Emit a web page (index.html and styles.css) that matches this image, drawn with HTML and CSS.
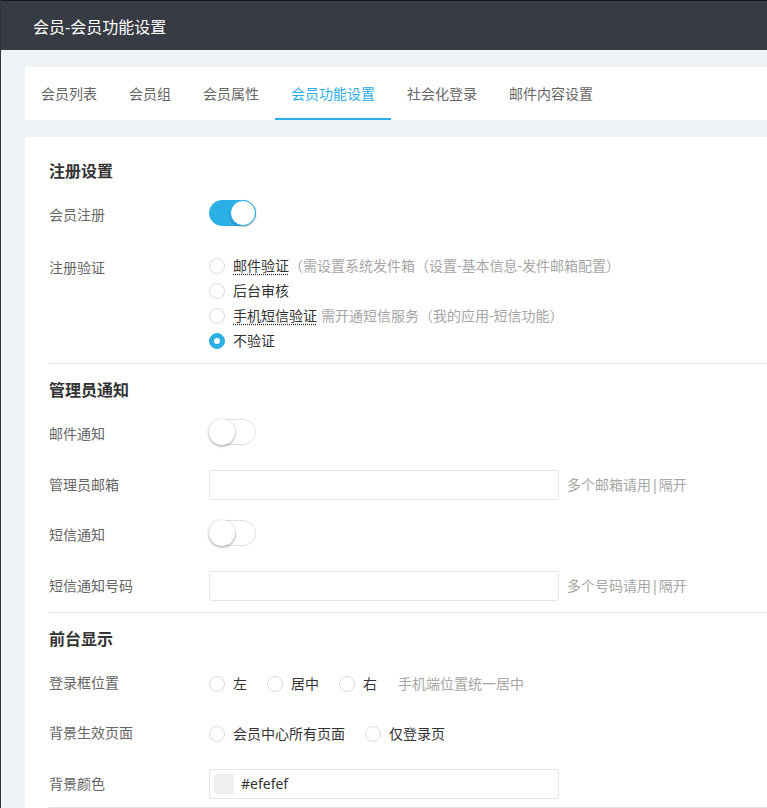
FILE: index.html
```html
<!DOCTYPE html>
<html lang="zh-CN">
<head>
<meta charset="utf-8">
<title>会员功能设置</title>
<link rel="stylesheet" href="styles.css">
</head>
<body>
<div class="topbar">会员-会员功能设置</div>
<div class="main">
  <div class="tabs">
    <span class="tab">会员列表</span>
    <span class="tab">会员组</span>
    <span class="tab">会员属性</span>
    <span class="tab active">会员功能设置</span>
    <span class="tab">社会化登录</span>
    <span class="tab">邮件内容设置</span>
  </div>
  <div class="card">
    <div class="section s1">
      <h3 class="sec-title">注册设置</h3>
      <div class="row">
        <div class="label">会员注册</div>
        <div class="control"><span class="switch on"><span class="knob"></span></span></div>
      </div>
      <div class="row last">
        <div class="label label-radio">注册验证</div>
        <div class="control radio-list">
          <div class="radio-line"><span class="radio"></span><span class="abbr">邮件验证</span><span class="hint">（需设置系统发件箱（设置-基本信息-发件邮箱配置）</span></div>
          <div class="radio-line"><span class="radio"></span><span class="opt">后台审核</span></div>
          <div class="radio-line"><span class="radio"></span><span class="abbr">手机短信验证</span><span class="hint gap">需开通短信服务（我的应用-短信功能）</span></div>
          <div class="radio-line"><span class="radio checked"></span><span class="opt">不验证</span></div>
        </div>
      </div>
    </div>

    <div class="section s2">
      <h3 class="sec-title">管理员通知</h3>
      <div class="row">
        <div class="label">邮件通知</div>
        <div class="control"><span class="switch"><span class="knob"></span></span></div>
      </div>
      <div class="row">
        <div class="label">管理员邮箱</div>
        <div class="control"><span class="input"></span><span class="hint side">多个邮箱请用|隔开</span></div>
      </div>
      <div class="row">
        <div class="label">短信通知</div>
        <div class="control"><span class="switch"><span class="knob"></span></span></div>
      </div>
      <div class="row last">
        <div class="label">短信通知号码</div>
        <div class="control"><span class="input"></span><span class="hint side">多个号码请用|隔开</span></div>
      </div>
    </div>

    <div class="section s3">
      <h3 class="sec-title">前台显示</h3>
      <div class="row">
        <div class="label">登录框位置</div>
        <div class="control inline-radios">
          <span class="radio-inline"><span class="radio"></span><span class="opt">左</span></span>
          <span class="radio-inline"><span class="radio"></span><span class="opt">居中</span></span>
          <span class="radio-inline"><span class="radio"></span><span class="opt">右</span></span>
          <span class="hint">手机端位置统一居中</span>
        </div>
      </div>
      <div class="row">
        <div class="label">背景生效页面</div>
        <div class="control inline-radios">
          <span class="radio-inline"><span class="radio"></span><span class="opt">会员中心所有页面</span></span>
          <span class="radio-inline"><span class="radio"></span><span class="opt">仅登录页</span></span>
        </div>
      </div>
      <div class="row last">
        <div class="label">背景颜色</div>
        <div class="control"><span class="input color-input"><span class="swatch"></span><span class="color-text">#efefef</span></span></div>
      </div>
    </div>
  </div>
</div>
</body>
</html>
```

FILE: styles.css
```css
html {
  overflow: hidden;
}

body {
  margin: 0;
  background: #eef3f6;
  border-left: 1px solid #2f333a;
  font-family: "Noto Sans", "Noto Sans CJK SC", sans-serif;
  font-size: 14px;
  color: #333;
  min-height: 808px;
  box-sizing: border-box;
}

.topbar {
  height: 50px;
  box-sizing: border-box;
  background: #373b43;
  border-top: 1px solid #15171a;
  padding: 3px 0 0 32px;
  line-height: 46px;
  font-size: 16px;
  color: #fff;
}

.main {
  padding: 17px 0 0 24px;
}

.tabs {
  display: flex;
  background: #fff;
  height: 53px;
  box-sizing: border-box;
}

.tab {
  padding: 2px 16px 0;
  line-height: 49px;
  color: #666;
  border-bottom: 2px solid transparent;
  white-space: nowrap;
}

.tab.active {
  color: #2aaee5;
  border-bottom-color: #2aaee5;
}

.card {
  margin-top: 17px;
  background: #fff;
  padding-left: 24px;
}

.section {
  padding-top: 16px;
  border-top: 1px solid #e7e7e7;
}

.section.s1 {
  border-top: none;
  padding-top: 24px;
  padding-bottom: 10.5px;
}

.section.s2 {
  padding-bottom: 11px;
}

.section.s3 {
  padding-bottom: 8px;
  border-bottom: 1px solid #e2e2e2;
}

.sec-title {
  margin: 0 0 19px;
  font-size: 16px;
  line-height: 20px;
  font-weight: bold;
  color: #333;
}

.row {
  display: flex;
  min-height: 30px;
  margin-bottom: 20.5px;
}

.row.last {
  margin-bottom: 0;
}

.label {
  width: 160px;
  flex: none;
  line-height: 30px;
  color: #666;
}

.label.label-radio {
  padding-top: 2px;
}

.control {
  display: flex;
  align-items: flex-start;
}

/* switch */
.switch {
  position: relative;
  display: block;
  width: 47px;
  height: 26px;
  box-sizing: border-box;
  border: 1px solid #dfdfdf;
  border-radius: 13px;
  background: #fff;
}

.switch .knob {
  position: absolute;
  top: -1px;
  left: -1px;
  width: 26px;
  height: 26px;
  box-sizing: border-box;
  border-radius: 50%;
  background: #fff;
  box-shadow: 0 1px 3px rgba(0, 0, 0, 0.4);
}

.switch.on {
  background: #2bb0e6;
  border-color: #2bb0e6;
}

.switch.on .knob {
  left: auto;
  right: -1px;
  border: 1px solid #2bb0e6;
  box-shadow: 0 1px 2px rgba(0, 0, 0, 0.25);
}

/* radios */
.radio-list {
  flex-direction: column;
  padding-top: 2px;
}

.radio-line {
  display: flex;
  align-items: center;
  height: 25px;
  white-space: nowrap;
}

.radio {
  flex: none;
  width: 16px;
  height: 16px;
  box-sizing: border-box;
  border: 1px solid #dcdcdc;
  border-radius: 50%;
  margin: 2px 8px 0 0;
  background: #fff;
  display: flex;
  align-items: center;
  justify-content: center;
}

.radio.checked {
  background: #2bb0e6;
  border-color: #2bb0e6;
}

.radio.checked::after {
  content: "";
  width: 6px;
  height: 6px;
  border-radius: 50%;
  background: #fff;
}

.opt {
  color: #333;
}

.abbr {
  color: #333;
  text-decoration: underline dotted #333;
  text-underline-offset: 3px;
}

.hint {
  color: #a6a6a6;
  white-space: nowrap;
}

.hint.gap {
  margin-left: 4px;
}

.hint.side {
  margin-left: 8px;
  line-height: 30px;
}

.inline-radios {
  align-items: center;
  height: 30px;
}

.radio-inline {
  display: flex;
  align-items: center;
  margin-right: 20px;
  white-space: nowrap;
}

.inline-radios .hint {
  margin-left: 1px;
}

/* inputs */
.input {
  display: block;
  width: 350px;
  height: 30px;
  box-sizing: border-box;
  border: 1px solid #e6e6e6;
  border-radius: 2px;
  background: #fff;
}

.color-input {
  display: flex;
  align-items: center;
  padding-left: 4px;
}

.swatch {
  width: 20px;
  height: 20px;
  border-radius: 2px;
  background: #efefef;
}

.color-text {
  margin-left: 7px;
  color: #333;
  font-size: 14px;
}
```
